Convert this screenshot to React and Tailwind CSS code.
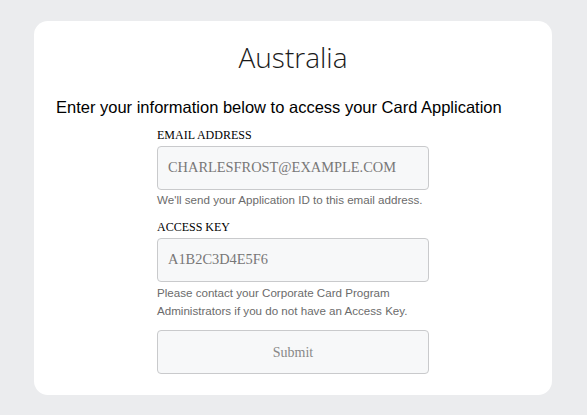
const serif = "font-['Liberation_Serif',serif]";
const sans = "font-['Liberation_Sans',Arial,sans-serif]";

export default function App() {
  return (
    <div className="min-h-[415px] w-full bg-[#ebecee] pt-[21px] pb-[20px] px-[34px]">
      <div className="w-[518px] h-[374px] rounded-[14px] bg-white pt-[16px]">
        <h1 className="text-center text-[28px] leading-[40px] font-light text-[#1a1a1a] font-['Open_Sans',sans-serif]">
          Australia
        </h1>
        <p className="mt-[20px] ml-[22px] text-[16.5px] leading-[20px] text-black font-['Liberation_Sans',Arial,sans-serif]">
          Enter your information below to access your Card Application
        </p>
        <div className="ml-[123px] w-[272px] mt-[11px] flex flex-col">
          <label className="text-[12px] leading-[14px] text-black font-['Liberation_Serif',serif]">
            EMAIL ADDRESS
          </label>
          <div className="mt-[4px] h-[44px] flex items-center px-[10px] rounded-[4px] border border-[#c9cacc] bg-[#f7f8f9] text-[14.4px] text-[#777] font-['Liberation_Serif',serif]">
            CHARLESFROST@EXAMPLE.COM
          </div>
          <p className="mt-[1px] whitespace-nowrap text-[11.6px] leading-[18px] text-[#6b6b6b] font-['Liberation_Sans',Arial,sans-serif]">
            We'll send your Application ID to this email address.
          </p>
          <label className="mt-[11px] text-[12px] leading-[14px] text-black font-['Liberation_Serif',serif]">
            ACCESS KEY
          </label>
          <div className="mt-[4px] h-[44px] flex items-center px-[10px] rounded-[4px] border border-[#c9cacc] bg-[#f7f8f9] text-[14.4px] text-[#777] font-['Liberation_Serif',serif]">
            A1B2C3D4E5F6
          </div>
          <p className="mt-[2px] pr-[12px] text-[11.6px] leading-[18px] text-[#6b6b6b] font-['Liberation_Sans',Arial,sans-serif]">
            Please contact your Corporate Card Program Administrators if you do not have an Access Key.
          </p>
          <button className="mt-[10px] h-[44px] rounded-[4px] border border-[#c9cacc] bg-[#f7f8f9] text-[14px] text-[#888] font-['Liberation_Serif',serif]">
            Submit
          </button>
        </div>
      </div>
    </div>
  );
}
